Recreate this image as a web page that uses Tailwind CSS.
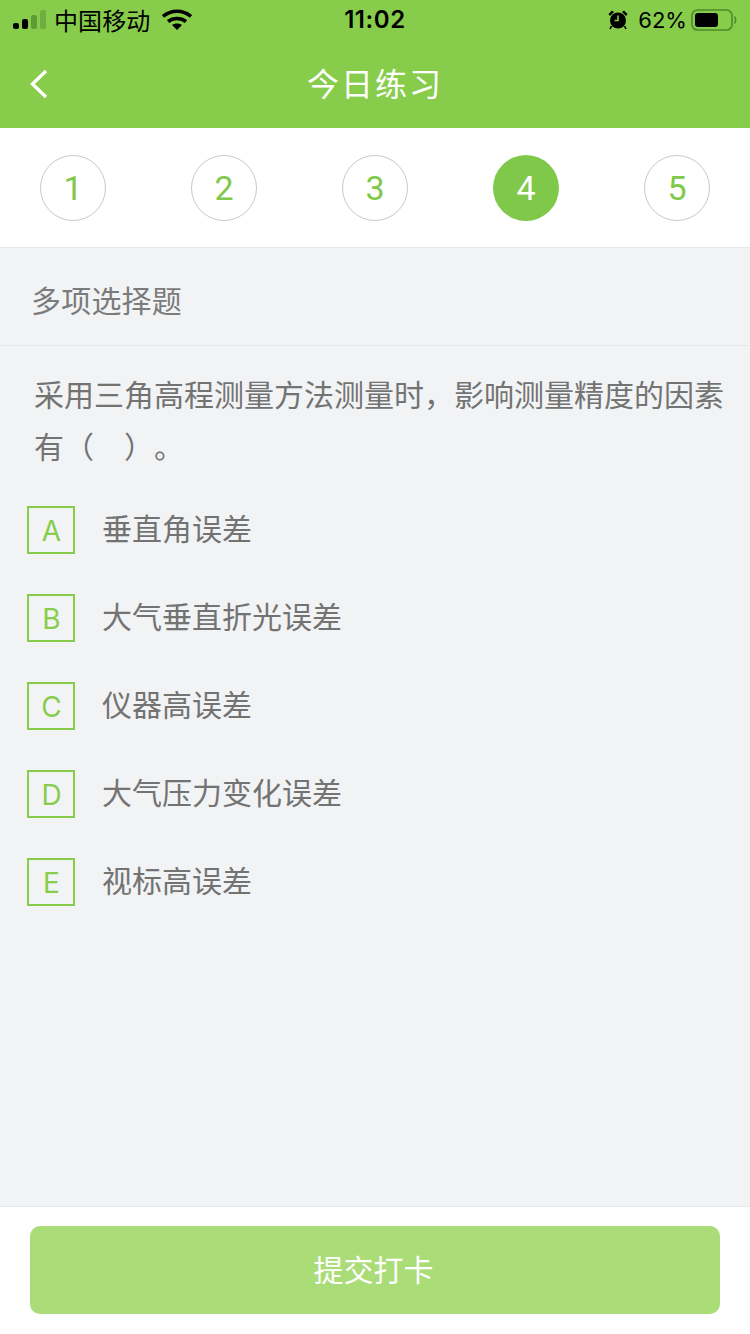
<!DOCTYPE html>
<html lang="zh">
<head>
<meta charset="utf-8">
<script src="https://cdn.jsdelivr.net/npm/@tailwindcss/browser@4"></script>
</head>
<body class="m-0">
<div class="w-[750px] h-[1334px] flex flex-col bg-[#f2f3f5] overflow-hidden font-['Noto_Sans_CJK_SC',sans-serif]">
  <header class="h-[128px] shrink-0 bg-[#87cd4b] flex flex-col">
    <div class="h-[40px] shrink-0 px-[13px] grid grid-cols-3 items-center text-black">
      <div class="flex items-center">
        <svg width="34" height="20" viewBox="0 0 34 20" class="mr-[8px]">
          <rect x="0" y="13" width="6" height="6" rx="2" fill="#000"/>
          <rect x="9" y="9" width="6" height="10" rx="2" fill="#000"/>
          <rect x="18" y="5" width="6" height="14" rx="2" fill="#5f9a35"/>
          <rect x="27" y="0" width="6" height="19" rx="2" fill="#6fae3e"/>
        </svg>
        <span class="text-[24px] leading-[40px] tracking-[0.1px] -ml-[1px]">中国移动</span>
        <svg width="30" height="22" viewBox="0 0 30 22" class="ml-[12px]">
          <path d="M1 7.5 C 9 0.5, 21 0.5, 29 7.5" fill="none" stroke="#000" stroke-width="3.6"/>
          <path d="M6 12.5 C 11 8.5, 19 8.5, 24 12.5" fill="none" stroke="#000" stroke-width="3.6"/>
          <path d="M10 16 C 13 14, 17 14, 20 16 L15 21 Z" fill="#000"/>
        </svg>
      </div>
      <div class="text-center text-[24px] leading-[40px] font-semibold font-['Inter'] tracking-[0.6px]">11:02</div>
      <div class="flex items-center justify-end">
        <svg width="22" height="22" viewBox="0 0 22 22" class="mr-[9px]">
          <circle cx="11" cy="11.5" r="8" fill="#000"/>
          <path d="M11 6.5 V11.5 H7.5" stroke="#87cd4b" stroke-width="1.6" fill="none"/>
          <path d="M1.5 5 L5 1.5 L7 3 L3 7 Z M20.5 5 L17 1.5 L15 3 L19 7 Z" fill="#000"/>
          <path d="M4.5 17 L3 20 M17.5 17 L19 20" stroke="#000" stroke-width="1.6"/>
        </svg>
        <span class="text-[22px] leading-[40px] font-['Inter'] font-normal">62%</span>
        <svg width="46" height="24" viewBox="0 0 46 24" class="ml-[4px]">
          <rect x="1" y="2" width="40" height="20" rx="5.5" fill="none" stroke="#4f8a2a" stroke-width="1.6"/>
          <rect x="4" y="5" width="23" height="14" rx="3" fill="#000"/>
          <path d="M43.5 8.5 C45 10, 45 14, 43.5 15.5" fill="none" stroke="#4f8a2a" stroke-width="1.6"/>
        </svg>
      </div>
    </div>
    <div class="relative flex-1 flex items-center justify-center pb-[4px]">
      <svg width="20" height="32" viewBox="0 0 20 32" class="absolute left-[29px] top-[28px]">
        <path d="M17 3 L3.5 16 L17 29" fill="none" stroke="#fff" stroke-width="3.4"/>
      </svg>
      <h1 class="text-[32px] leading-[44px] text-white font-normal tracking-[2px]">今日练习</h1>
    </div>
  </header>

  <nav class="h-[120px] shrink-0 bg-white border-b border-[#e6e7e9] flex items-center justify-between px-[40px] pt-[1px]">
    <div class="w-[66px] h-[66px] rounded-full border border-[#c8c8c8] flex items-center justify-center text-[34px] text-[#82c84a] font-['Roboto'] font-normal">1</div>
    <div class="w-[66px] h-[66px] rounded-full border border-[#c8c8c8] flex items-center justify-center text-[34px] text-[#82c84a] font-['Roboto'] font-normal">2</div>
    <div class="w-[66px] h-[66px] rounded-full border border-[#c8c8c8] flex items-center justify-center text-[34px] text-[#82c84a] font-['Roboto'] font-normal">3</div>
    <div class="w-[66px] h-[66px] rounded-full bg-[#7fc84a] flex items-center justify-center text-[34px] text-white font-['Roboto'] font-normal">4</div>
    <div class="w-[66px] h-[66px] rounded-full border border-[#c8c8c8] flex items-center justify-center text-[34px] text-[#82c84a] font-['Roboto'] font-normal">5</div>
  </nav>

  <main class="flex-1 flex flex-col min-h-0">
    <div class="h-[98px] shrink-0 border-b border-[#e6e7e9] px-[31px] flex items-center text-[30px] text-[#7b7b7b] leading-none pt-[5px] tracking-[0.2px]">多项选择题</div>
    <p class="pl-[34px] pr-[24px] pt-[21px] text-[30px] leading-[52px] text-[#737373] [text-spacing-trim:space-all]">采用三角高程测量方法测量时，影响测量精度的因素有（　）。</p>
    <ul class="mt-[35px] pl-[27px] flex flex-col gap-[40px]">
      <li class="flex items-center h-[48px]">
        <span class="w-[48px] h-[48px] shrink-0 border-2 border-[#87cd4b] flex items-center justify-center text-[28px] text-[#87cd4b] font-['Inter'] font-normal pt-[2px] pl-[1px]">A</span>
        <span class="ml-[27px] text-[30px] leading-none text-[#737373] -mt-[6px]">垂直角误差</span>
      </li>
      <li class="flex items-center h-[48px]">
        <span class="w-[48px] h-[48px] shrink-0 border-2 border-[#87cd4b] flex items-center justify-center text-[28px] text-[#87cd4b] font-['Inter'] font-normal pt-[2px] pl-[1px]">B</span>
        <span class="ml-[27px] text-[30px] leading-none text-[#737373] -mt-[6px]">大气垂直折光误差</span>
      </li>
      <li class="flex items-center h-[48px]">
        <span class="w-[48px] h-[48px] shrink-0 border-2 border-[#87cd4b] flex items-center justify-center text-[28px] text-[#87cd4b] font-['Inter'] font-normal pt-[2px] pl-[1px]">C</span>
        <span class="ml-[27px] text-[30px] leading-none text-[#737373] -mt-[6px]">仪器高误差</span>
      </li>
      <li class="flex items-center h-[48px]">
        <span class="w-[48px] h-[48px] shrink-0 border-2 border-[#87cd4b] flex items-center justify-center text-[28px] text-[#87cd4b] font-['Inter'] font-normal pt-[2px] pl-[1px]">D</span>
        <span class="ml-[27px] text-[30px] leading-none text-[#737373] -mt-[6px]">大气压力变化误差</span>
      </li>
      <li class="flex items-center h-[48px]">
        <span class="w-[48px] h-[48px] shrink-0 border-2 border-[#87cd4b] flex items-center justify-center text-[28px] text-[#87cd4b] font-['Inter'] font-normal pt-[2px] pl-[1px]">E</span>
        <span class="ml-[27px] text-[30px] leading-none text-[#737373] -mt-[6px]">视标高误差</span>
      </li>
    </ul>
  </main>

  <footer class="h-[128px] shrink-0 bg-white border-t border-[#e6e7e9] px-[30px] pt-[19px]">
    <button class="w-[690px] h-[88px] rounded-[10px] bg-[#aadc78] text-white text-[30px] pb-[4px] pr-[3px]">提交打卡</button>
  </footer>
</div>
</body>
</html>
